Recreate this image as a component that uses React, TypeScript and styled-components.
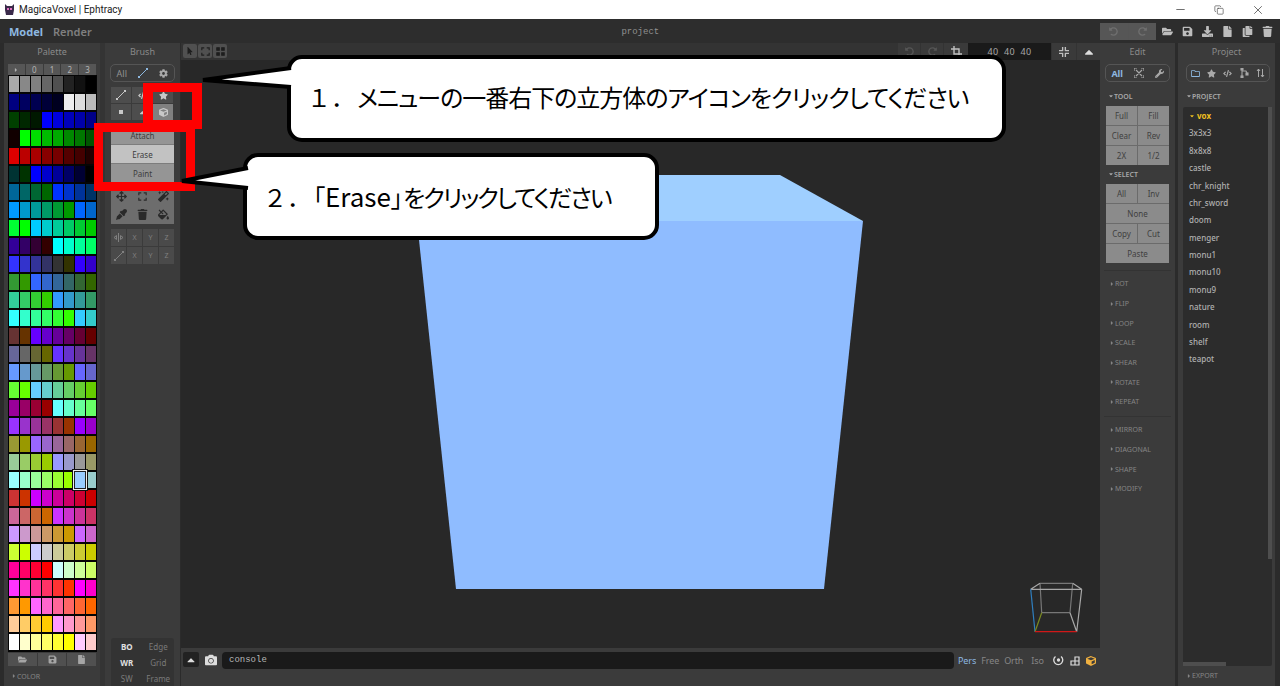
import React from "react";
import styled, { createGlobalStyle } from "styled-components";
import {
  FaFolderOpen, FaRegFolder, FaSave, FaDownload, FaFile, FaCopy, FaTrash, FaStar, FaCube, FaWrench, FaCog,
  FaEyeDropper, FaFillDrip, FaMagic, FaArrowsAlt, FaCamera, FaUndoAlt, FaRedoAlt, FaCode, FaMousePointer,
  FaCaretRight, FaCaretDown, FaCaretUp, FaSquareFull,
} from "react-icons/fa";
import { Minus, Copy, X } from "lucide-react";

const UI = `"Noto Sans", "Open Sans", sans-serif`;

const GlobalStyle = createGlobalStyle`
  html, body { margin: 0; padding: 0; background: #2b2b2b; overflow: hidden; }
  * { box-sizing: border-box; }
`;

const Page = styled.div`
  position: relative;
  width: 1280px;
  height: 686px;
  display: flex;
  flex-direction: column;
  font-family: ${UI};
  overflow: hidden;
`;

const TitleBar = styled.div`
  height: 19px;
  background: #fff;
  display: flex;
  align-items: center;
  padding-left: 3px;
  color: #222;
  font: 10px Roboto, sans-serif;
`;
const TitleText = styled.span`
  margin-left: 3px;
  flex: 1;
`;
const WinButton = styled.span`
  width: 38.5px;
  display: flex;
  justify-content: center;
  color: #333;
  &:last-child { margin-right: 3px; }
`;

const TopBar = styled.div`
  height: 24px;
  background: #2d2d2d;
  display: flex;
  align-items: center;
  padding-left: 9px;
  position: relative;
`;
const ModeTab = styled.span<{ $on?: boolean }>`
  font-size: 11px;
  font-weight: ${(p) => (p.$on ? 700 : 600)};
  margin-right: 10px;
  color: ${(p) => (p.$on ? "#8db8e0" : "#808080")};
`;
const ProjectName = styled.span`
  flex: 1;
  text-align: center;
  font: 9px "Liberation Mono", monospace;
  color: #909090;
  padding: 2px 0 0 79px;
`;
const UndoGroup = styled.div`
  width: 56px;
  height: 17px;
  display: flex;
  background: #555;
  gap: 1px;
  border-radius: 1px;
`;
const UndoCell = styled.span`
  flex: 1;
  display: flex;
  align-items: center;
  justify-content: center;
  color: #6f6f6f;
  font-size: 9px;
  background: #565656;
`;
const FileIcons = styled.div`
  width: 124px;
  display: flex;
  justify-content: space-between;
  padding: 0 7px 0 6px;
  color: #bdbdbd;
  font-size: 11px;
`;

const Main = styled.div`
  flex: 1;
  display: flex;
  min-height: 0;
  background: #2b2b2b;
  padding: 0 5px 0 4px;
`;
const Panel = styled.section<{ $w: number }>`
  width: ${(p) => p.$w}px;
  flex-shrink: 0;
  background: #3b3b3b;
  display: flex;
  flex-direction: column;
  align-items: center;
  position: relative;
`;
const Gutter = styled.div`
  width: 5px;
  background: #343434;
`;
const PanelTitle = styled.h2`
  margin: 0;
  height: 21px;
  line-height: 17px;
  font-size: 9px;
  font-weight: 400;
  color: #8a8a8a;
`;

const PaletteTabs = styled.div`
  width: 88px;
  height: 11px;
  display: flex;
  gap: 1px;
`;
const PaletteTab = styled.span`
  flex: 1;
  background: #565656;
  color: #b4b4b4;
  font-size: 8px;
  line-height: 11px;
  text-align: center;
`;
const SwatchGrid = styled.div`
  width: 89px;
  display: grid;
  grid-template-columns: repeat(8, 11px);
  grid-auto-rows: 18px;
  background: #050505;
  padding: 0.5px;
  position: relative;
`;
const Swatch = styled.div<{ $selected?: boolean }>`
  margin: 1px 0.5px;
  ${(p) =>
    p.$selected
      ? "box-shadow: 0 0 0 1px #222, 0 0 0 2px #eee, 0 0 0 3px #111; z-index: 1;"
      : ""}
`;
const PaletteActions = styled.div`
  width: 88px;
  height: 14px;
  margin-top: 1px;
  display: flex;
  gap: 1px;
`;
const PaletteAction = styled.span`
  flex: 1;
  background: #505050;
  color: #a5a5a5;
  font-size: 9px;
  display: flex;
  align-items: center;
  justify-content: center;
`;
const Section = styled.div<{ $top?: number; $left?: number }>`
  align-self: stretch;
  display: flex;
  align-items: center;
  height: 19.7px;
  margin-top: ${(p) => p.$top ?? 0}px;
  padding-left: ${(p) => p.$left ?? 9}px;
  font-size: 7px;
  color: #858585;
  flex-shrink: 0;
`;
const Heading = styled(Section)`
  color: #a8a8a8;
  font-weight: 600;
  height: 16px;
`;
const TabGroup = styled.div`
  width: 65px;
  height: 18px;
  border: 1px solid #555;
  border-radius: 5px;
  display: flex;
  align-items: center;
  justify-content: space-around;
  color: #a8a8a8;
  font-size: 9px;
  flex-shrink: 0;
`;
const ProjectTabGroup = styled(TabGroup)`
  width: 84px;
  margin-left: 3px;
`;
const Label = styled.span<{ $on?: boolean }>`
  display: inline-flex;
  color: ${(p) => (p.$on ? "#8db8e0" : "#909090")};
  font-weight: ${(p) => (p.$on ? 700 : 400)};
`;

const ToolGrid = styled.div`
  margin-top: 5px;
  width: 63px;
  display: grid;
  grid-template-columns: repeat(3, 21px);
  grid-auto-rows: 17px;
  background: #3b3b3b;
`;
const ToolCell = styled.span<{ $on?: boolean }>`
  display: flex;
  align-items: center;
  justify-content: center;
  margin: 0 1px 1px 0;
  background: ${(p) => (p.$on ? "#808080" : "#4d4d4d")};
  color: #c8c8c8;
  font-size: 9px;
`;
const BrushMenu = styled.div`
  margin-top: 5px;
  width: 63px;
  background: #8a8a8a;
  display: flex;
  flex-direction: column;
`;
const BrushItem = styled.div<{ $on?: boolean }>`
  height: 19px;
  line-height: 19px;
  text-align: center;
  font-size: 8px;
  color: #3d3d3d;
  background: ${(p) => (p.$on ? "#c2c2c2" : "#959595")};
  border-bottom: 1px solid #7d7d7d;
`;
const ActionGrid = styled.div`
  width: 63px;
  height: 41px;
  padding-top: 4px;
  background: #6d6d6d;
  display: grid;
  grid-template-columns: repeat(3, 21px);
  grid-auto-rows: 18px;
  justify-items: center;
  align-items: center;
  color: #2a2a2a;
  font-size: 11px;
`;
const AxisGrid = styled.div`
  margin-top: 5px;
  width: 63px;
  display: grid;
  grid-template-columns: repeat(4, 1fr);
  grid-auto-rows: 17px;
  gap: 1px;
`;
const AxisCell = styled.span`
  background: #4a4a4a;
  color: #808080;
  font-size: 7px;
  display: flex;
  align-items: center;
  justify-content: center;
`;
const Spacer = styled.div`
  flex: 1;
`;
const ViewGrid = styled.div`
  width: 63px;
  height: 48px;
  background: #333;
  border-radius: 3px 3px 0 0;
  display: grid;
  grid-template-columns: 1fr 1fr;
  grid-auto-rows: 16px;
  align-items: center;
  text-align: center;
  font-size: 8px;
`;
const ViewLabel = styled.span<{ $on?: boolean }>`
  color: ${(p) => (p.$on ? "#e0e0e0" : "#7a7a7a")};
  font-weight: ${(p) => (p.$on ? 700 : 400)};
`;

const Viewport = styled.main`
  flex: 1;
  margin-left: 1px;
  display: flex;
  flex-direction: column;
  background: #282828;
  min-width: 0;
`;
const ViewStrip = styled.div`
  height: 17px;
  background: #333;
  display: flex;
  align-items: stretch;
  padding: 1px 0 0 2px;
  color: #999;
`;
const StripButton = styled.span`
  width: 14px;
  height: 14px;
  margin-right: 1px;
  background: #505050;
  border-radius: 2px;
  color: #1e1e1e;
  font-size: 8px;
  display: flex;
  align-items: center;
  justify-content: center;
`;
const SizeBar = styled.div`
  margin-left: auto;
  display: flex;
  align-items: stretch;
  height: 17px;
  margin-top: -1px;
`;
const SizeCell = styled.span<{ $w: number; $dim?: boolean }>`
  width: ${(p) => p.$w}px;
  margin-left: 1px;
  background: #3a3a3a;
  color: ${(p) => (p.$dim ? "#555" : "#c0c0c0")};
  font-size: 9px;
  display: flex;
  align-items: center;
  justify-content: center;
`;
const SizeField = styled.span`
  width: 83px;
  background: #1a1a1a;
  color: #a8a8a8;
  font-size: 9px;
  letter-spacing: 0.3px;
  word-spacing: 3px;
  display: flex;
  align-items: center;
  justify-content: center;
`;
const Canvas = styled.div`
  flex: 1;
  position: relative;
  min-height: 0;
`;
const Scene = styled.svg`
  position: absolute;
  inset: 0;
  width: 100%;
  height: 100%;
`;
const ConsoleBar = styled.div`
  height: 38px;
  background: #3b3b3b;
  display: flex;
  align-items: flex-start;
  padding: 4px 0 0 2px;
`;
const DarkButton = styled.span`
  width: 16px;
  height: 15px;
  background: #222;
  border-radius: 2px;
  color: #ddd;
  font-size: 8px;
  display: flex;
  align-items: center;
  justify-content: center;
`;
const CameraIcon = styled.span`
  width: 23px;
  height: 15px;
  color: #ddd;
  font-size: 12px;
  display: flex;
  align-items: center;
  justify-content: center;
`;
const ConsoleField = styled.div`
  width: 732px;
  height: 17px;
  background: #1a1a1a;
  border-radius: 4px;
  color: #b8b8b8;
  font: 9px/17px "Liberation Mono", monospace;
  padding-left: 7px;
`;
const CameraModes = styled.div`
  margin-left: 4px;
  height: 17px;
  display: flex;
  align-items: center;
  font-size: 9px;
  letter-spacing: -0.1px;
  color: #868686;
  gap: 5px;
`;
const CameraMode = styled.span<{ $on?: boolean; $gap?: number }>`
  color: ${(p) => (p.$on ? "#8db8e0" : "#868686")};
  margin-right: ${(p) => p.$gap ?? 0}px;
`;
const ModeIcon = styled.span<{ $c?: string }>`
  color: ${(p) => p.$c ?? "#ddd"};
  font-size: 10px;
  display: flex;
  margin-left: 1px;
`;

const EditPanel = styled(Panel)`
  margin-right: 3px;
`;
const ButtonGrid = styled.div`
  width: 63px;
  background: #6b6b6b;
  display: grid;
  grid-template-columns: 1fr 1fr;
  gap: 1px;
  border-radius: 2px;
  margin-top: 2px;
`;
const GridButton = styled.span<{ $wide?: boolean }>`
  height: 19px;
  background: #8b8b8b;
  color: #404040;
  font-size: 8px;
  text-align: center;
  line-height: 19px;
  ${(p) => (p.$wide ? "grid-column: span 2;" : "")}
`;
const Rule = styled.hr<{ $top: number }>`
  width: 67px;
  margin: ${(p) => p.$top}px 0 3px;
  border: 0;
  border-top: 1px solid #333;
`;
const FileList = styled.div`
  margin: 3px 0 0 2px;
  width: 89px;
  height: 559px;
  background: #2c2c2c;
  border-radius: 2px;
  padding: 0 0 0 6px;
  position: relative;
  font-size: 8px;
  color: #b0b0b0;
`;
const FileRow = styled.div<{ $head?: boolean }>`
  height: 17.38px;
  line-height: 17.38px;
  display: flex;
  align-items: center;
  gap: 2px;
  color: ${(p) => (p.$head ? "#f0c020" : "#b0b0b0")};
  font-weight: ${(p) => (p.$head ? 700 : 500)};
`;
const ScrollY = styled.div`
  position: absolute;
  right: 0;
  top: 0;
  width: 4px;
  height: 452px;
  background: #4e4e4e;
`;
const ScrollX = styled.div`
  position: absolute;
  left: 0;
  bottom: 0;
  width: 43px;
  height: 4px;
  background: #4e4e4e;
`;

const Mark = styled.div<{ $x: number; $y: number; $w: number; $h: number; $bx: number; $by: number }>`
  position: absolute;
  left: ${(p) => p.$x}px;
  top: ${(p) => p.$y}px;
  width: ${(p) => p.$w}px;
  height: ${(p) => p.$h}px;
  border-style: solid;
  border-color: #ff0000;
  border-width: ${(p) => p.$by}px ${(p) => p.$bx}px;
`;
const Bubble = styled.div<{ $x: number; $y: number; $w: number; $h: number }>`
  position: absolute;
  left: ${(p) => p.$x}px;
  top: ${(p) => p.$y}px;
  width: ${(p) => p.$w}px;
  height: ${(p) => p.$h}px;
  background: #fff;
  border: 4px solid #000;
  border-radius: 15px;
  display: flex;
  align-items: baseline;
  padding: 21px 0 0 16px;
  color: #000;
  font: 400 24px/1.4 "Noto Sans CJK JP", "Noto Sans", sans-serif;
  font-feature-settings: "palt";
  white-space: nowrap;
`;
const Numeral = styled.span`
  font-feature-settings: normal;
  margin-right: 2px;
`;
const Tracked = styled.span<{ $track: number; $size?: number }>`
  letter-spacing: ${(p) => p.$track}px;
  ${(p) => (p.$size ? `font-size: ${p.$size}px;` : "")}
`;
const Tail = styled.svg`
  position: absolute;
  overflow: visible;
  left: 0;
  top: 0;
`;

const swatches = `aaaaaa 888888 808080 666666 505050 222222 111111 000000
000080 000060 000050 000038 000020 eeeeee dddddd bbbbbb
004000 002800 001800 0000ff 0000dd 0000bb 0000aa 000088
110000 00ff00 00dd00 00bb00 00aa00 008800 007700 005500
dd0000 bb0000 aa0000 880000 770000 550000 440000 220000
003333 003300 0000ff 0000cc 000099 000066 000033 000000
006699 006666 006633 006600 0033ff 0033cc 003399 003366
0099ff 0099cc 009999 009966 009933 009900 0066ff 0066cc
00ff33 00ff00 00ccff 00cccc 00cc99 00cc66 00cc33 00cc00
330099 330066 330033 330000 00ffff 00ffcc 00ff99 00ff66
3333ff 3333cc 333399 333366 333333 333300 3300ff 3300cc
339933 339900 3366ff 3366cc 336699 336666 336633 336600
33cc99 33cc66 33cc33 33cc00 3399ff 3399cc 339999 339966
33ffff 33ffcc 33ff99 33ff66 33ff33 33ff00 33ccff 33cccc
663333 663300 6600ff 6600cc 660099 660066 660033 660000
666699 666666 666633 666600 6633ff 6633cc 663399 663366
6699ff 6699cc 669999 669966 669933 669900 6666ff 6666cc
66ff33 66ff00 66ccff 66cccc 66cc99 66cc66 66cc33 66cc00
990099 990066 990033 990000 66ffff 66ffcc 66ff99 66ff66
9933ff 9933cc 993399 993366 993333 993300 9900ff 9900cc
999933 999900 9966ff 9966cc 996699 996666 996633 996600
99cc99 99cc66 99cc33 99cc00 9999ff 9999cc 999999 999966
99ffff 99ffcc 99ff99 99ff66 99ff33 99ff00 99ccff 99cccc
cc3333 cc3300 cc00ff cc00cc cc0099 cc0066 cc0033 cc0000
cc6699 cc6666 cc6633 cc6600 cc33ff cc33cc cc3399 cc3366
cc99ff cc99cc cc9999 cc9966 cc9933 cc9900 cc66ff cc66cc
ccff33 ccff00 ccccff cccccc cccc99 cccc66 cccc33 cccc00
ff0099 ff0066 ff0033 ff0000 ccffff ccffcc ccff99 ccff66
ff33ff ff33cc ff3399 ff3366 ff3333 ff3300 ff00ff ff00cc
ff9933 ff9900 ff66ff ff66cc ff6699 ff6666 ff6633 ff6600
ffcc99 ffcc66 ffcc33 ffcc00 ff99ff ff99cc ff9999 ff9966
ffffff ffffcc ffff99 ffff66 ffff33 ffff00 ffccff ffcccc`
  .split(/\s+/);

const projectFiles = ["3x3x3", "8x8x8", "castle", "chr_knight", "chr_sword", "doom", "menger", "monu1", "monu10", "monu9", "nature", "room", "shelf", "teapot"];

function LineIcon() {
  return (
    <svg width="10" height="10" viewBox="0 0 10 10">
      <path d="M1 9 L9 1" stroke="currentColor" strokeWidth="1" />
      <rect x="0" y="8" width="2" height="2" fill="currentColor" />
      <rect x="8" y="0" width="2" height="2" fill="currentColor" />
    </svg>
  );
}

function Corners({ dots }: { dots?: boolean }) {
  return (
    <svg width="9" height="9" viewBox="0 0 11 11" fill="none" stroke="currentColor" strokeWidth="1.4">
      {dots ? (
        <path d="M1 1h3v3h-3zM7 1h3v3h-3zM1 7h3v3h-3zM7 7h3v3h-3z" fill="currentColor" />
      ) : (
        <path d="M1 4V1h3M7 1h3v3M10 7v3H7M4 10H1V7" />
      )}
    </svg>
  );
}

function ExpandIcon() {
  return (
    <svg width="10" height="10" viewBox="0 0 10 10" fill="none" stroke="currentColor" strokeWidth="1.2">
      <path d="M2 2l6 6M8 2L2 8M0 3V0h3M7 0h3v3M10 7v3H7M3 10H0V7" />
    </svg>
  );
}

function TreeIcon() {
  return (
    <svg width="9" height="10" viewBox="0 0 9 10" fill="none" stroke="currentColor" strokeWidth="1.1">
      <path d="M2 1v8M2 3h4l1 2" />
      <rect x="1" y="0" width="2" height="2" fill="currentColor" />
      <rect x="1" y="8" width="2" height="2" fill="currentColor" />
      <rect x="6" y="5" width="2" height="2" fill="currentColor" />
    </svg>
  );
}

function SortIcon() {
  return (
    <svg width="9" height="10" viewBox="0 0 9 10" fill="none" stroke="currentColor" strokeWidth="1">
      <path d="M2.5 9V1M1 3l1.5-2L4 3M6.5 1v8M5 7l1.5 2L8 7" />
    </svg>
  );
}

function InwardCorners() {
  return (
    <svg width="10" height="10" viewBox="0 0 11 11" fill="none" stroke="currentColor" strokeWidth="1.5">
      <path d="M4 0v4H0M7 0v4h4M4 11V7H0M7 11V7h4" />
    </svg>
  );
}

function AxisIcon() {
  return (
    <svg width="9" height="9" viewBox="0 0 9 9" fill="none" stroke="currentColor">
      <path d="M4.5 0v9M0 4.5l2.5-2v4zM9 4.5l-2.5-2v4z" />
    </svg>
  );
}

function OrbitIcon() {
  return (
    <svg width="11" height="11" viewBox="0 0 11 11" fill="none" stroke="currentColor" strokeWidth="1.3">
      <path d="M2.5 1.5A4.5 4.5 0 1 0 8 1.5" />
      <circle cx="5.5" cy="5" r="1" fill="currentColor" />
    </svg>
  );
}

function BlocksIcon() {
  return (
    <svg width="10" height="10" viewBox="0 0 10 10" fill="none" stroke="currentColor" strokeWidth="1.2">
      <path d="M1 5h4v4H1zM5 5h4v4H5zM5 1h4v4H5z" />
    </svg>
  );
}

function Collapsed({ name }: { name: string }) {
  return (
    <Section $left={9}>
      <FaCaretRight size={6} />
      {name}
    </Section>
  );
}

export default function App() {
  return (
    <Page>
      <GlobalStyle />
      <TitleBar>
        <svg width="13" height="13" viewBox="0 0 13 13">
          <path d="M2 1l2 2h5l2-2v6l-1 5H3L2 7z" fill="#3a2a4a" />
          <rect x="4" y="5" width="2" height="2" fill="#e070c0" />
          <rect x="7" y="5" width="2" height="2" fill="#e070c0" />
        </svg>
        <TitleText>MagicaVoxel | Ephtracy</TitleText>
        <WinButton><Minus size={13} strokeWidth={1.3} /></WinButton>
        <WinButton><Copy size={10} strokeWidth={1.4} /></WinButton>
        <WinButton><X size={14} strokeWidth={1.2} /></WinButton>
      </TitleBar>

      <TopBar>
        <ModeTab $on>Model</ModeTab>
        <ModeTab>Render</ModeTab>
        <ProjectName>project</ProjectName>
        <UndoGroup>
          <UndoCell><FaUndoAlt /></UndoCell>
          <UndoCell><FaRedoAlt /></UndoCell>
        </UndoGroup>
        <FileIcons>
          <FaFolderOpen /><FaSave /><FaDownload /><FaFile /><FaCopy /><FaTrash />
        </FileIcons>
      </TopBar>

      <Main>
        <Panel $w={96}>
          <PanelTitle>Palette</PanelTitle>
          <PaletteTabs>
            <PaletteTab><FaCaretRight size={6} /></PaletteTab>
            <PaletteTab>0</PaletteTab>
            <PaletteTab>1</PaletteTab>
            <PaletteTab>2</PaletteTab>
            <PaletteTab>3</PaletteTab>
          </PaletteTabs>
          <SwatchGrid>
            {swatches.map((c, i) => (
              <Swatch key={i} $selected={i === 22 * 8 + 6} style={{ background: `#${c}` }} />
            ))}
          </SwatchGrid>
          <PaletteActions>
            <PaletteAction><FaFolderOpen /></PaletteAction>
            <PaletteAction><FaSave /></PaletteAction>
            <PaletteAction><FaFile /></PaletteAction>
          </PaletteActions>
          <Section $left={7}><FaCaretRight size={6} />COLOR</Section>
        </Panel>
        <Gutter />
        <Panel $w={75}>
          <PanelTitle>Brush</PanelTitle>
          <TabGroup>
            <Label>All</Label>
            <Label $on><LineIcon /></Label>
            <FaCog />
          </TabGroup>
          <ToolGrid>
            <ToolCell><LineIcon /></ToolCell>
            <ToolCell><FaCode /></ToolCell>
            <ToolCell><FaStar /></ToolCell>
            <ToolCell><FaSquareFull size={4} /></ToolCell>
            <ToolCell><FaCaretUp /></ToolCell>
            <ToolCell $on><FaCube /></ToolCell>
          </ToolGrid>
          <BrushMenu>
            <BrushItem>Attach</BrushItem>
            <BrushItem $on>Erase</BrushItem>
            <BrushItem>Paint</BrushItem>
          </BrushMenu>
          <ActionGrid>
            <FaArrowsAlt />
            <Corners />
            <FaMagic />
            <FaEyeDropper />
            <FaTrash />
            <FaFillDrip />
          </ActionGrid>
          <AxisGrid>
            <AxisCell><AxisIcon /></AxisCell><AxisCell>X</AxisCell><AxisCell>Y</AxisCell><AxisCell>Z</AxisCell>
            <AxisCell><LineIcon /></AxisCell><AxisCell>X</AxisCell><AxisCell>Y</AxisCell><AxisCell>Z</AxisCell>
          </AxisGrid>
          <Spacer />
          <ViewGrid>
            <ViewLabel $on>BO</ViewLabel><ViewLabel>Edge</ViewLabel>
            <ViewLabel $on>WR</ViewLabel><ViewLabel>Grid</ViewLabel>
            <ViewLabel>SW</ViewLabel><ViewLabel>Frame</ViewLabel>
          </ViewGrid>
        </Panel>

        <Viewport>
          <ViewStrip>
            <StripButton><FaMousePointer /></StripButton>
            <StripButton><Corners /></StripButton>
            <StripButton><Corners dots /></StripButton>
            <SizeBar>
              <SizeCell $w={22} $dim><FaUndoAlt /></SizeCell>
              <SizeCell $w={22} $dim><FaRedoAlt /></SizeCell>
              <SizeCell $w={24}>
                <svg width="11" height="11" viewBox="0 0 11 11" fill="none" stroke="currentColor" strokeWidth="1.4">
                  <path d="M3 0v8h8M0 3h8v8" />
                </svg>
              </SizeCell>
              <SizeField>40 40 40</SizeField>
              <SizeCell $w={24}><InwardCorners /></SizeCell>
              <SizeCell $w={23}><FaCaretUp size={14} color="#ddd" /></SizeCell>
            </SizeBar>
          </ViewStrip>
          <Canvas>
            <Scene viewBox="181 60 919 588">
              <polygon points="497,175 780,175 863,221 417,221" fill="#9fcfff" />
              <polygon points="417,221 863,221 824,589 456,589" fill="#8fbcff" />
              <g fill="none" stroke="#a8a8a8" strokeWidth="1.2">
                <path d="M1040 583.3H1072.7M1041.7 612.7H1070M1040 583.3L1041.7 612.7M1072.7 583.3L1070 612.7" stroke="#777" />
                <path d="M1030.7 589.3H1081.7M1030.7 589.3L1040 583.3M1081.7 589.3L1072.7 583.3M1081.7 589.3L1076.7 631.7M1076.7 631.7L1070 612.7" />
                <path d="M1030.7 589.3L1035 631.7" stroke="#2f7fc0" />
                <path d="M1035 631.7L1041.7 612.7" stroke="#7a8a20" />
                <path d="M1035 631.7H1076.7" stroke="#d01818" />
              </g>
            </Scene>
          </Canvas>
          <ConsoleBar>
            <DarkButton><FaCaretUp size={12} /></DarkButton>
            <CameraIcon><FaCamera /></CameraIcon>
            <ConsoleField>console</ConsoleField>
            <CameraModes>
              <CameraMode $on>Pers</CameraMode>
              <CameraMode>Free</CameraMode>
              <CameraMode $gap={3}>Orth</CameraMode>
              <CameraMode $gap={3}>Iso</CameraMode>
              <ModeIcon><OrbitIcon /></ModeIcon>
              <ModeIcon><BlocksIcon /></ModeIcon>
              <ModeIcon $c="#efb040"><FaCube /></ModeIcon>
            </CameraModes>
          </ConsoleBar>
        </Viewport>

        <EditPanel $w={75}>
          <PanelTitle>Edit</PanelTitle>
          <TabGroup>
            <Label $on>All</Label>
            <ExpandIcon />
            <FaWrench />
          </TabGroup>
          <Heading $top={6} $left={8}><FaCaretDown size={6} />TOOL</Heading>
          <ButtonGrid>
            <GridButton>Full</GridButton><GridButton>Fill</GridButton>
            <GridButton>Clear</GridButton><GridButton>Rev</GridButton>
            <GridButton>2X</GridButton><GridButton>1/2</GridButton>
          </ButtonGrid>
          <Heading $top={1} $left={8}><FaCaretDown size={6} />SELECT</Heading>
          <ButtonGrid>
            <GridButton>All</GridButton><GridButton>Inv</GridButton>
            <GridButton $wide>None</GridButton>
            <GridButton>Copy</GridButton><GridButton>Cut</GridButton>
            <GridButton $wide>Paste</GridButton>
          </ButtonGrid>
          <Rule $top={7} />
          <Collapsed name="ROT" />
          <Collapsed name="FLIP" />
          <Collapsed name="LOOP" />
          <Collapsed name="SCALE" />
          <Collapsed name="SHEAR" />
          <Collapsed name="ROTATE" />
          <Collapsed name="REPEAT" />
          <Rule $top={4} />
          <Collapsed name="MIRROR" />
          <Collapsed name="DIAGONAL" />
          <Collapsed name="SHAPE" />
          <Collapsed name="MODIFY" />
        </EditPanel>

        <Panel $w={97}>
          <PanelTitle>Project</PanelTitle>
          <ProjectTabGroup>
            <Label $on><FaRegFolder /></Label>
            <FaStar />
            <FaCode />
            <TreeIcon />
            <SortIcon />
          </ProjectTabGroup>
          <Heading $top={6} $left={8}><FaCaretDown size={6} />PROJECT</Heading>
          <FileList>
            <FileRow $head><FaCaretDown size={6} />vox</FileRow>
            {projectFiles.map((f) => (
              <FileRow key={f}>{f}</FileRow>
            ))}
            <ScrollY />
            <ScrollX />
          </FileList>
          <Section $left={8}><FaCaretRight size={6} />EXPORT</Section>
        </Panel>
      </Main>

      <Mark $x={143} $y={83} $w={59} $h={46} $bx={10} $by={9} />
      <Mark $x={94} $y={123} $w={101} $h={68} $bx={9} $by={9} />

      <Bubble $x={287} $y={55} $w={719} $h={87}>
        <Tail width="1" height="1">
          <path d="M4 13 L-84 25 L4 32" fill="#fff" stroke="#000" strokeWidth="4" transform="translate(-4 -4)" />
        </Tail>
        <Numeral>１．</Numeral>
        <Tracked $track={-1}>メニューの一番右下の立方体のアイコンをクリックしてください</Tracked>
      </Bubble>
      <Bubble $x={243} $y={153} $w={416} $h={87}>
        <Tail width="1" height="1">
          <path d="M5 15 L-61 28 L5 35" fill="#fff" stroke="#000" strokeWidth="4" transform="translate(-4 -4)" />
        </Tail>
        <Numeral>２．</Numeral>
        <Tracked $track={0}>「</Tracked>
        <Tracked $track={0} $size={26}>Erase</Tracked>
        <Tracked $track={0}>」</Tracked>
        <Tracked $track={-2}>をクリックしてください</Tracked>
      </Bubble>
    </Page>
  );
}
